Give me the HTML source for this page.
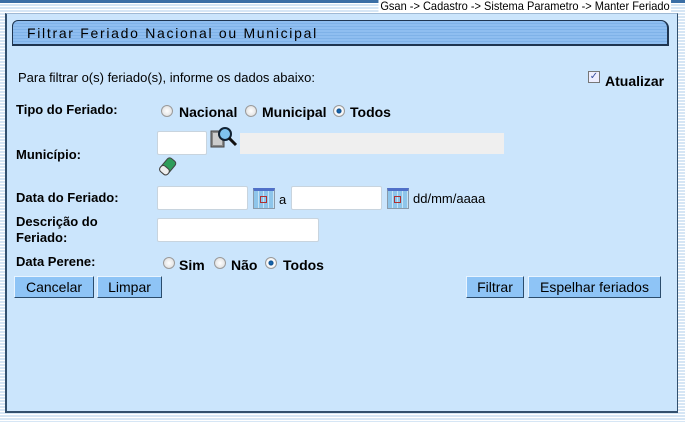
<!DOCTYPE html>
<html><head><meta charset="utf-8"><style>
*{margin:0;padding:0;box-sizing:border-box}
body{width:685px;height:422px;overflow:hidden;position:relative;font-family:"Liberation Sans",Arial,sans-serif;background:repeating-linear-gradient(#fff 0,#fff 1px,#d6e6f5 1px,#d6e6f5 3px)}
.a{position:absolute}
#top{left:0;top:0;width:685px;height:3px;background:linear-gradient(90deg,#3a6ea5 0,#3a6ea5 85%,#f5c400 85%,#f5c400 93%,#3a6ea5 93%)}
#crumb{right:14px;top:-1px;font-size:12px;color:#000;background:#fff;padding:0 2px;transform:scaleX(.92);transform-origin:right}
#panel{left:5px;top:13px;width:673px;height:400px;background:#cbe5fc;border:2px solid #32506e;border-top:1px solid #9fb9d4;border-right:1px solid #32506e}
#title{left:12px;top:20px;width:657px;height:26px;background:repeating-linear-gradient(#8fbef0 0,#8fbef0 2px,#7fb2e8 2px,#7fb2e8 3px);border:1px solid #1f3550;border-width:1px 2px 2px 1px;border-radius:6px 8px 0 0;font-size:14px;letter-spacing:1.7px;color:#000;padding:4px 0 0 14px}
.t{font-size:13px;color:#000}
.b{font-size:13px;font-weight:bold;color:#000}
.in{background:#fff;border:1px solid #c8d4de;border-radius:2px}
.r{position:absolute;width:12px;height:12px;border-radius:50%;border:1px solid #9a9a9a;background:radial-gradient(#fff,#d8d8d8)}
.r.on{background:radial-gradient(#1d6fb8 0,#0a4e90 30%,#fff 42%,#ddd 100%)}
.btn{height:22px;background:#8ec4f6;border:1px solid #2b4c6c;border-top-color:#e8f4ff;border-left-color:#e8f4ff;font-size:14px;color:#000;text-align:center;line-height:20px}
.cal{width:22px;height:21px;background:repeating-linear-gradient(90deg,#8ec5ea 0,#8ec5ea 4px,#c6e4f6 4px,#c6e4f6 5px);border:1px solid #8a9aaa;border-top:3px solid #5070c8}
.cal:after{content:"";position:absolute;left:6px;top:5px;width:5px;height:5px;border:1px solid #b03030}
</style></head><body>
<div class="a" id="top"></div>
<div class="a" id="crumb">Gsan -&gt; Cadastro -&gt; Sistema Parametro -&gt; Manter Feriado</div>
<div class="a" id="panel"></div>
<div class="a" id="title">Filtrar Feriado Nacional ou Municipal</div>

<div class="a t" style="left:18px;top:70px">Para filtrar o(s) feriado(s), informe os dados abaixo:</div>
<div class="a" style="left:588px;top:71px;width:12px;height:12px;border:1px solid #777;background:#eef;font-size:10px;line-height:10px;color:#3a50a0;text-align:center">✓</div>
<div class="a b" style="left:605px;top:73px;font-size:14px">Atualizar</div>

<div class="a b" style="left:16px;top:102px">Tipo do Feriado:</div>
<span class="r" style="left:161px;top:105px"></span><div class="a b" style="left:179px;top:104px;font-size:14px">Nacional</div>
<span class="r" style="left:245px;top:105px"></span><div class="a b" style="left:262px;top:104px;font-size:14px">Municipal</div>
<span class="r on" style="left:333px;top:105px"></span><div class="a b" style="left:350px;top:104px;font-size:14px">Todos</div>

<div class="a in" style="left:157px;top:131px;width:50px;height:24px"></div>
<svg class="a" style="left:210px;top:125px" width="28" height="28" viewBox="0 0 28 28"><rect x="1" y="6" width="13" height="16" fill="#888" stroke="#444"/><rect x="3" y="8" width="9" height="12" fill="#ccc"/><circle cx="15" cy="9" r="6" fill="#7fc3ee" stroke="#123" stroke-width="2"/><path d="M19 13l7 7" stroke="#111" stroke-width="3"/></svg>
<div class="a" style="left:240px;top:133px;width:264px;height:21px;background:#efefef"></div>
<svg class="a" style="left:157px;top:155px" width="22" height="22" viewBox="0 0 22 22"><g transform="rotate(-50 11 11)"><rect x="2" y="6" width="17" height="10" rx="3" fill="#2f9d5a" stroke="#444"/><rect x="2" y="6" width="7" height="10" rx="3" fill="#eee" stroke="#444"/></g></svg>
<div class="a b" style="left:16px;top:147px">Município:</div>

<div class="a b" style="left:16px;top:190px">Data do Feriado:</div>
<div class="a in" style="left:157px;top:186px;width:91px;height:24px"></div>
<div class="a cal" style="left:253px;top:188px"></div>
<div class="a t" style="left:279px;top:192px">a</div>
<div class="a in" style="left:291px;top:186px;width:91px;height:24px"></div>
<div class="a cal" style="left:387px;top:188px"></div>
<div class="a t" style="left:413px;top:191px">dd/mm/aaaa</div>

<div class="a b" style="left:16px;top:214px;line-height:16px">Descrição do<br>Feriado:</div>
<div class="a in" style="left:157px;top:218px;width:162px;height:24px"></div>

<div class="a b" style="left:16px;top:254px">Data Perene:</div>
<span class="r" style="left:163px;top:257px"></span><div class="a b" style="left:179px;top:257px;font-size:14px">Sim</div>
<span class="r" style="left:214px;top:257px"></span><div class="a b" style="left:231px;top:257px;font-size:14px">Não</div>
<span class="r on" style="left:265px;top:257px"></span><div class="a b" style="left:283px;top:257px;font-size:14px">Todos</div>

<div class="a btn" style="left:14px;top:276px;width:80px">Cancelar</div>
<div class="a btn" style="left:97px;top:276px;width:65px">Limpar</div>
<div class="a btn" style="left:466px;top:276px;width:58px">Filtrar</div>
<div class="a btn" style="left:528px;top:276px;width:133px">Espelhar feriados</div>
</body></html>
